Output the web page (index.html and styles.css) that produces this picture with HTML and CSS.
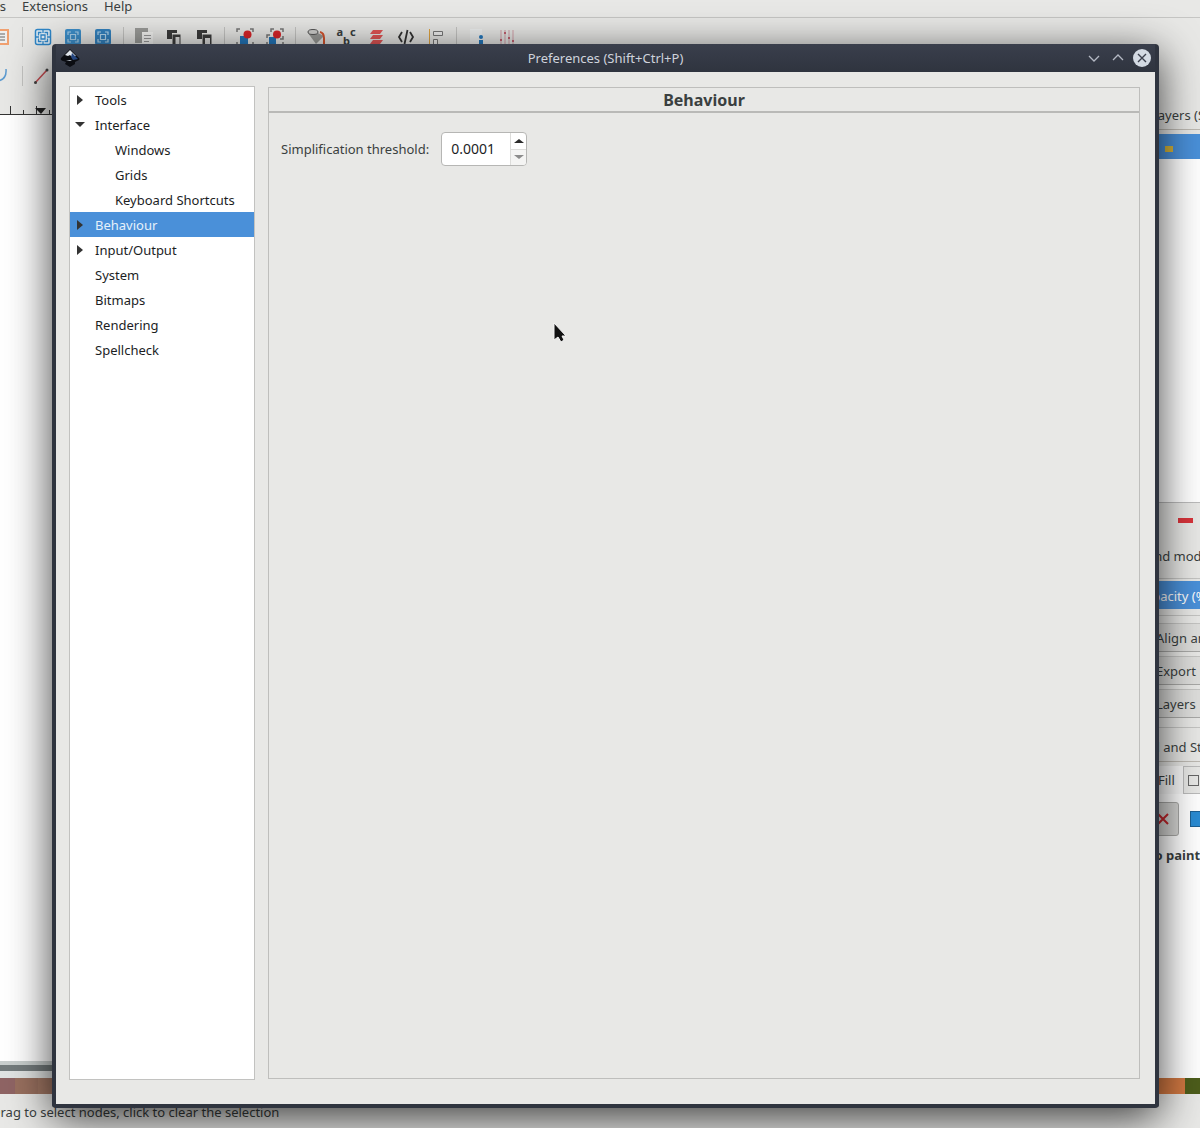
FILE: index.html
```html
<!DOCTYPE html>
<html lang="en">
<head>
    <meta charset="UTF-8">
    <meta name="viewport" content="width=device-width, initial-scale=1.0">
    <title>Preferences (Shift+Ctrl+P)</title>
    <link rel="stylesheet" href="styles.css">
</head>
<body>
    <!-- Main window, behind the dialog -->
    <div class="app">
        <nav class="menubar">
            <a href="#">Filters</a>
            <a href="#">Extensions</a>
            <a href="#">Help</a>
        </nav>

        <div class="toolbar">
            <button type="button" class="tool" aria-label="Paste">
                <svg viewBox="0 0 18 18"><path d="M2 2h13v14H2z" fill="#eee" stroke="#f0a070" stroke-width="2"/><path d="M6 6h6M6 9h6M6 12h6" stroke="#666"/></svg>
            </button>
            <span class="sep"></span>
            <button type="button" class="tool" aria-label="Zoom selection">
                <svg viewBox="0 0 18 18"><rect x="1.500" y="1.500" width="15" height="15" rx="2" fill="#e4eef5" stroke="#2f87c9" stroke-width="1.500"/><path d="M4.500 7.500v-3h3M10.500 4.500h3v3M13.500 10.500v3h-3M7.500 13.500h-3v-3M7 7h4v4H7zM9 1v4M9 13v4M1 9h4M13 9h4" fill="none" stroke="#2f87c9" stroke-width="1.300"/></svg>
            </button>
            <button type="button" class="tool" aria-label="Zoom drawing">
                <svg viewBox="0 0 18 18"><rect x="1" y="1" width="16" height="16" rx="2" fill="#3d8fca"/><path d="M4 7V4h3M11 4h3v3M14 11v3h-3M7 14H4v-3M6.500 6.500h5v5h-5z" fill="none" stroke="#a9d0ea" stroke-width="1.200"/></svg>
            </button>
            <button type="button" class="tool" aria-label="Zoom page">
                <svg viewBox="0 0 18 18"><rect x="1" y="1" width="16" height="16" rx="2" fill="#3483c0"/><path d="M4 7V4h3M11 4h3v3M14 11v3h-3M7 14H4v-3M6.500 6.500h5v5h-5z" fill="none" stroke="#b5d8ee" stroke-width="1.200"/></svg>
            </button>
            <span class="sep"></span>
            <button type="button" class="tool" aria-label="Duplicate">
                <svg viewBox="0 0 18 18"><path d="M0 0h13v4H7v11H0z" fill="#9b9c99"/><path d="M7 4h11v13H7z" fill="#f4f4f2"/><path d="M9 7.500h7M9 10.500h7M9 13.500h5" stroke="#999"/></svg>
            </button>
            <button type="button" class="tool" aria-label="Clone">
                <svg viewBox="0 0 18 18"><path d="M2 2h10v3H7v6H2z" fill="#3b3b3b"/><path d="M7.500 6.500h8v10h-8z" fill="#3b3b3b"/><path d="M10.500 17V9h4v8z" fill="#ddd"/></svg>
            </button>
            <button type="button" class="tool" aria-label="Unlink clone">
                <svg viewBox="0 0 18 18"><path d="M2 2h10v3H7v6H2z" fill="#3b3b3b"/><path d="M7.500 6.500h9v10h-9z" fill="#3b3b3b"/><path d="M10 10h5v7h-5z" fill="#ddd"/></svg>
            </button>
            <span class="sep"></span>
            <button type="button" class="tool" aria-label="Group">
                <svg viewBox="0 0 18 18"><rect x="4" y="8" width="8" height="8" fill="#2478bd"/><circle cx="11.500" cy="6.500" r="4" fill="#d9252a"/><path d="M1 4V1h3M14 1h3v3M1 14v3h3M17 14v3h-3" fill="none" stroke="#777" stroke-width="1.500"/></svg>
            </button>
            <button type="button" class="tool" aria-label="Ungroup">
                <svg viewBox="0 0 18 18"><rect x="3" y="9" width="7" height="7" fill="#2478bd"/><circle cx="11" cy="6.500" r="4" fill="#d9252a"/><path d="M5 4V1h3M14 1h3v3M1 10V7h3M17 8v3h-3M1 14v3h3M17 14v3h-3" fill="none" stroke="#777" stroke-width="1.500"/></svg>
            </button>
            <span class="sep"></span>
            <button type="button" class="tool" aria-label="Fill and stroke">
                <svg viewBox="0 0 18 18"><path d="M1 5l6-2 10 5-8 8z" fill="#999a97"/><ellipse cx="6" cy="4" rx="5" ry="2.500" fill="#cfcfcd" stroke="#555"/><path d="M13 4q4 1 4 6v7" fill="none" stroke="#d5532d" stroke-width="2"/></svg>
            </button>
            <button type="button" class="tool letters" aria-label="Text and font"><span>a</span><span>b</span><span>c</span></button>
            <button type="button" class="tool" aria-label="Layers">
                <svg viewBox="0 0 18 18"><path d="M6 2h10l-3 4H3zM6 7h10l-3 4H3zM6 12h10l-3 4H3z" fill="#e25555"/></svg>
            </button>
            <button type="button" class="tool" aria-label="XML editor">
                <svg viewBox="0 0 18 18"><path d="M5 4L2 9l3 5M13 4l3 5-3 5M10.500 2l-3 14" fill="none" stroke="#333" stroke-width="1.800"/></svg>
            </button>
            <button type="button" class="tool" aria-label="Align">
                <svg viewBox="0 0 18 18"><path d="M2.500 1v17" stroke="#e0a33e"/><path d="M6.500 3.500h9v4h-9zM6.500 11.500h4v5h-4z" fill="#eee" stroke="#777"/></svg>
            </button>
            <span class="sep"></span>
            <button type="button" class="tool" aria-label="Document properties">
                <svg viewBox="0 0 18 18"><path d="M2 1h12v17H2z" fill="#eef0f0"/><circle cx="13" cy="9" r="2" fill="#2478bd"/><path d="M11 12h4v6h-4z" fill="#2478bd"/></svg>
            </button>
            <button type="button" class="tool" aria-label="Preferences">
                <svg viewBox="0 0 18 18"><path d="M3 2v14M7 2v14M11 2v14M15 2v14" stroke="#d3a0a8"/><path d="M2 12h2M6 5h2M10 10h2M14 13h2" stroke="#c25f6f" stroke-width="2"/></svg>
            </button>
        </div>

        <div class="toolbar">
            <button type="button" class="tool" aria-label="Curve segment">
                <svg viewBox="0 0 18 18"><path d="M13 2q1 11-9 12" fill="none" stroke="#5c9bd0" stroke-width="1.500"/></svg>
            </button>
            <span class="sep"></span>
            <button type="button" class="tool" aria-label="Line segment">
                <svg viewBox="0 0 18 18"><path d="M1 16L13 3" stroke="#c74b50" stroke-width="1.500"/><circle cx="1.500" cy="15.500" r="1.500" fill="#444"/><circle cx="13" cy="3" r="1.500" fill="#444"/></svg>
            </button>
        </div>

        <div class="workspace">
            <div class="document">
                <div class="ruler">
                    <svg viewBox="0 0 56 10" width="56" height="10"><path d="M10.500 2v8M23.500 6v4M36.500 2v8M49.500 6v4" stroke="#333"/><path d="M35 4h11l-5 6z" fill="#222"/></svg>
                </div>
                <div class="canvas"></div>
                <div class="scrollbar"></div>
            </div>

            <aside class="docks">
                <div class="dock-title layers-title">Layers (Shift+Ctrl+L)</div>
                <div class="layer-list">
                    <div class="layer-row"><span class="layer-mark"></span></div>
                </div>
                <div class="layer-actions">
                    <button type="button" class="remove" aria-label="Delete layer"></button>
                </div>
                <div class="blend">Blend mode:</div>
                <div class="opacity">Opacity (%)</div>
                <button type="button" class="dock-tab">Align and Distribute</button>
                <button type="button" class="dock-tab">Export PNG</button>
                <button type="button" class="dock-tab">Layers</button>
                <div class="dock-title fill-title">Fill and Stroke</div>
                <div class="tabs">
                    <button type="button" class="tab active">Fill</button>
                    <button type="button" class="tab"><span class="stroke-box"></span>Stroke paint</button>
                </div>
                <div class="paint">
                    <div class="paint-types">
                        <button type="button" class="paint-none" aria-label="No paint">
                            <svg viewBox="0 0 14 14" width="14" height="14"><path d="M2 2l10 10M12 2L2 12" stroke="#c5262c" stroke-width="2"/></svg>
                        </button>
                        <button type="button" class="paint-flat" aria-label="Flat color"></button>
                    </div>
                    <strong>No paint</strong>
                </div>
            </aside>
        </div>

        <div class="palette">
            <span class="swatch rosy"></span>
            <span class="swatch clay"></span>
            <span class="swatch umber"></span>
            <span class="swatch orange"></span>
            <span class="swatch olive"></span>
        </div>
        <div class="statusbar">Drag to select nodes, click to clear the selection</div>
    </div>

    <!-- Preferences dialog -->
    <div class="dialog" role="dialog" aria-labelledby="dialogTitle">
        <header class="titlebar">
            <svg class="logo" viewBox="0 0 20 20" width="20" height="20">
                <path d="M10 1L1 10q-1 2 2 3l3 1-1 2 5 3 5-3v-2l4-2q1-1 0-2z" fill="#0b0d12"/>
                <path d="M10 2L5 7l3 1 2-1 2 2 4-1z" fill="#dfe4ea"/>
                <path d="M12 5l6 6-5 1-2-3z" fill="#25467f"/>
                <path d="M6 12h6l-2 1z" fill="#b8c0c8"/>
            </svg>
            <span id="dialogTitle">Preferences (Shift+Ctrl+P)</span>
            <div class="window-buttons">
                <button type="button" aria-label="Minimize">
                    <svg viewBox="0 0 18 18" width="18" height="18"><path d="M4 7l5 5 5-5" fill="none" stroke="#b4b9c4" stroke-width="1.300"/></svg>
                </button>
                <button type="button" aria-label="Maximize">
                    <svg viewBox="0 0 18 18" width="18" height="18"><path d="M4 11l5-5 5 5" fill="none" stroke="#b4b9c4" stroke-width="1.300"/></svg>
                </button>
                <button type="button" aria-label="Close">
                    <svg viewBox="0 0 18 18" width="18" height="18"><circle cx="9" cy="9" r="9" fill="#d3dae3"/><path d="M5 5l8 8M13 5l-8 8" stroke="#3b404d" stroke-width="1.400"/></svg>
                </button>
            </div>
        </header>

        <div class="dialog-body">
            <ul class="tree">
                <li><button type="button" class="closed">Tools</button></li>
                <li>
                    <button type="button" class="open">Interface</button>
                    <ul>
                        <li><button type="button">Windows</button></li>
                        <li><button type="button">Grids</button></li>
                        <li><button type="button">Keyboard Shortcuts</button></li>
                    </ul>
                </li>
                <li><button type="button" class="closed selected">Behaviour</button></li>
                <li><button type="button" class="closed">Input/Output</button></li>
                <li><button type="button">System</button></li>
                <li><button type="button">Bitmaps</button></li>
                <li><button type="button">Rendering</button></li>
                <li><button type="button">Spellcheck</button></li>
            </ul>

            <section class="page">
                <h1>Behaviour</h1>
                <div class="field">
                    <label for="threshold">Simplification threshold:</label>
                    <div class="spin">
                        <input type="text" id="threshold" value="0.0001">
                        <div class="spin-buttons">
                            <button type="button" class="up" aria-label="Increase"></button>
                            <button type="button" class="down" aria-label="Decrease" disabled></button>
                        </div>
                    </div>
                </div>
            </section>
        </div>
    </div>

    <svg class="cursor" viewBox="0 0 14 22" width="14" height="22"><path d="M1 1v17l4-3 3 5 3-2-2-4h4z" fill="#111" stroke="#f4f4f4"/></svg>
</body>
</html>
```
FILE: styles.css
```css
* {
    box-sizing: border-box;
}

body {
    margin: 0;
    height: 100vh;
    overflow: hidden;
    position: relative;
    font-family: "Noto Sans", sans-serif;
    font-size: 13px;
    line-height: 18px;
    color: #3a3f40;
    background-color: #e8e8e6;
}

button {
    font: inherit;
    color: inherit;
    border: none;
    padding: 0;
    background: none;
}

svg {
    display: block;
}

/* main window */
.app {
    height: 100%;
    display: flex;
    flex-direction: column;
}

.menubar {
    height: 18px;
    flex: none;
    display: flex;
    gap: 16px;
    margin-left: -31px;
    line-height: 12px;
    border-bottom: 1px solid #c6c6c4;
}

.menubar a {
    color: inherit;
    text-decoration: none;
}

.toolbar {
    height: 39px;
    flex: none;
    display: flex;
    align-items: center;
    padding-bottom: 2px;
    margin-left: -13px;
}

.tool {
    width: 30px;
    height: 30px;
    display: flex;
    align-items: center;
    justify-content: center;
}

.tool svg {
    width: 18px;
    height: 18px;
}

.letters {
    font-weight: bold;
    font-size: 11px;
    line-height: 12px;
    align-items: flex-start;
    padding-top: 4px;
}

.letters span:nth-child(2) {
    padding-top: 9px;
}

.sep {
    width: 1px;
    height: 20px;
    margin: 0 5px;
    background-color: #c4c4c2;
}

.workspace {
    flex: 1;
    min-height: 0;
    display: flex;
}

.document {
    flex: 1;
    display: flex;
    flex-direction: column;
}

.ruler {
    height: 19px;
    display: flex;
    align-items: flex-end;
    border-bottom: 1px solid #333;
}

.canvas {
    flex: 1;
    background-color: #fff;
}

.scrollbar {
    height: 17px;
    border-top: 4px solid #c9cfce;
    border-bottom: 7px solid #e1e4e3;
    background-color: #737b7c;
}

.docks {
    width: 80px;
    display: flex;
    flex-direction: column;
    overflow: hidden;
    white-space: nowrap;
}

.dock-title {
    flex: none;
    border-bottom: 1px solid #bdb9b2;
}

.layers-title {
    height: 34px;
    padding: 10px 0 0 31px;
}

.layer-list {
    height: 373px;
    flex: none;
    border-top: 4px solid #e8e8e6;
    border-bottom: 1px solid #bbb;
    background-color: #fff;
}

.layer-row {
    height: 25px;
    display: flex;
    align-items: center;
    padding: 4px 0 0 45px;
    background-color: #4a90d9;
}

.layer-mark {
    width: 8px;
    height: 6px;
    background-color: #d6b53c;
}

.layer-actions {
    height: 34px;
    flex: none;
    display: flex;
    align-items: center;
    padding-left: 58px;
}

.remove {
    width: 15px;
    height: 5px;
    background-color: #d8343b;
}

.blend {
    height: 42px;
    flex: none;
    padding: 10px 0 0 15px;
    border-bottom: 1px solid #c4c4c2;
}

.opacity {
    height: 28px;
    flex: none;
    margin: 2px 0 10px;
    padding: 6px 0 0 22px;
    color: #fff;
    background-color: #4a90d9;
    box-shadow: 0 6px #e8e8e6, 0 7px #c4c4c2;
}

.dock-tab {
    height: 29px;
    flex: none;
    margin-top: 4px;
    padding-left: 36px;
    text-align: left;
    border-top: 1px solid #c4c4c2;
    border-bottom: 1px solid #a9a9a7;
    background-color: #dededc;
}

.fill-title {
    height: 35px;
    margin-top: 9px;
    padding: 10px 0 0 23px;
    border-top: 1px solid #c4c4c2;
}

.tabs {
    flex: none;
    display: flex;
    padding: 4px 0 0 30px;
}

.tab {
    height: 28px;
    flex: none;
    display: flex;
    align-items: center;
    gap: 4px;
    padding: 0 4px;
    border: 1px solid #bbb;
}

.tab.active {
    padding: 0 7px;
    border-color: transparent;
    background-color: #f8f8f8;
}

.stroke-box {
    width: 11px;
    height: 11px;
    border: 1px solid #666;
}

.paint {
    flex: 1;
    padding: 8px 0 0 24px;
    background-color: #fff;
}

.paint-types {
    display: flex;
    align-items: center;
    gap: 11px;
    margin-bottom: 10px;
}

.paint-none {
    width: 35px;
    height: 34px;
    flex: none;
    display: flex;
    align-items: center;
    justify-content: flex-end;
    padding-right: 8px;
    border: 1px solid #a9a9a7;
    border-radius: 3px;
    background-color: #d6d6d4;
}

.paint-flat {
    width: 16px;
    height: 16px;
    flex: none;
    border: 1px solid #1d5f92;
    background-color: #2a8bd3;
}

.palette {
    height: 16px;
    flex: none;
    display: flex;
}

.swatch {
    width: 15px;
}

.rosy {
    background-color: #8f6464;
}

.clay {
    width: 23px;
    background-color: #99705f;
}

.umber {
    flex: 1;
    background-color: #a07663;
}

.orange {
    width: 40px;
    background-color: #d17842;
}

.olive {
    background-color: #4d5d1b;
}

.statusbar {
    height: 34px;
    flex: none;
    padding-top: 9px;
    margin-left: -9px;
}

/* dialog, floating over the main window */
.dialog {
    position: absolute;
    top: 44px;
    right: 41px;
    bottom: 20px;
    left: 52px;
    display: flex;
    flex-direction: column;
    border: 4px solid #2f343f;
    border-top: none;
    border-radius: 4px;
    background-color: #e8e8e6;
    box-shadow: 0 10px 44px rgba(0, 0, 0, 0.75);
}

.titlebar {
    height: 28px;
    flex: none;
    display: grid;
    grid-template-columns: 1fr auto 1fr;
    align-items: center;
    padding: 0 4px;
    color: #cfd3dc;
    background: linear-gradient(#3a3f4c, #2f343f);
}

.window-buttons {
    display: flex;
    justify-content: flex-end;
    gap: 6px;
}

.dialog-body {
    flex: 1;
    min-height: 0;
    display: flex;
    gap: 13px;
    padding: 14px 15px 24px 13px;
}

.tree {
    width: 186px;
    flex: none;
    margin: 0;
    padding: 0;
    list-style: none;
    color: #1c1e1f;
    border: 1px solid #c2c2c0;
    background-color: #fff;
}

.tree ul {
    margin: 0;
    padding: 0;
    list-style: none;
}

.tree button {
    width: 100%;
    height: 25px;
    display: flex;
    align-items: center;
    padding-left: 25px;
    text-align: left;
}

.tree ul button {
    padding-left: 45px;
}

/* expander arrows */
.tree .closed::before,
.tree .open::before {
    content: "";
    border-style: solid;
    border-color: transparent;
}

.tree .closed::before {
    margin-left: -18px;
    margin-right: 12px;
    border-width: 5px 0 5px 6px;
    border-left-color: #333;
}

.tree .open::before {
    margin-left: -20px;
    margin-right: 10px;
    border-width: 5px 5px 0;
    border-top-color: #333;
}

.tree .selected {
    color: #e6f0fa;
    background-color: #4a90d9;
}

.page {
    flex: 1;
    margin-top: 1px;
    margin-bottom: 1px;
    border: 1px solid #bebebc;
}

.page h1 {
    margin: 0;
    padding: 3px 0 2px;
    font-size: 16px;
    line-height: 18px;
    text-align: center;
    border-bottom: 2px solid #b9b9b7;
}

.field {
    display: flex;
    align-items: center;
    gap: 12px;
    padding: 19px 12px;
}

.spin {
    width: 86px;
    height: 34px;
    display: flex;
    overflow: hidden;
    border: 1px solid #b6b6b4;
    border-radius: 4px;
    background-color: #fff;
}

.spin input {
    flex: 1;
    min-width: 0;
    padding: 0 0 0 9px;
    font: inherit;
    font-size: 14px;
    color: #1c1e1f;
    border: none;
    background: none;
}

.spin-buttons {
    width: 16px;
    display: flex;
    flex-direction: column;
    border-left: 1px solid #dcdcda;
}

.spin-buttons button {
    flex: 1;
    display: flex;
    align-items: center;
    justify-content: center;
}

.spin-buttons button::before {
    content: "";
    border: 5px solid transparent;
}

.spin-buttons .up::before {
    border-top: none;
    border-bottom: 4px solid #2b2b2b;
}

.spin-buttons .down {
    border-top: 1px solid #dcdcda;
    background-color: #f4f4f3;
}

.spin-buttons .down::before {
    border-bottom: none;
    border-top: 4px solid #8c8c8c;
}

.cursor {
    position: absolute;
    top: 322px;
    left: 553px;
}
```
